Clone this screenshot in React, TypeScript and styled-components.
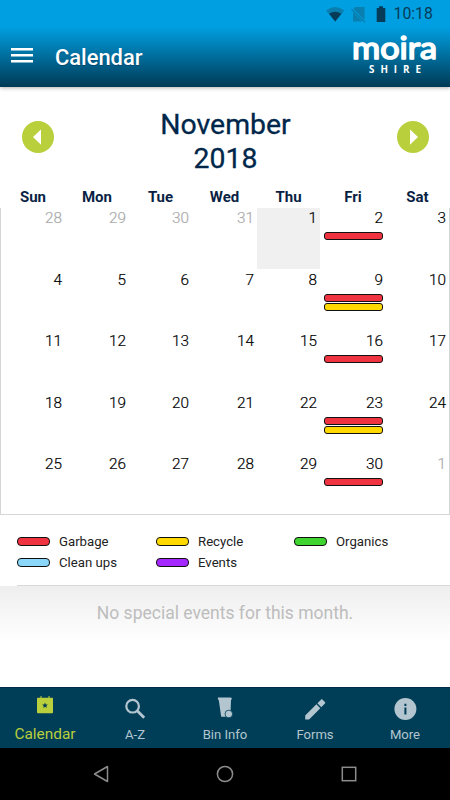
import React from 'react';
import styled, { createGlobalStyle } from 'styled-components';

const Global = createGlobalStyle`
  * { box-sizing: border-box; }
  body { margin: 0; background: #fff; font-family: Roboto, "Liberation Sans", sans-serif; }
`;

const Screen = styled.div`
  width: 450px;
  height: 800px;
  display: flex;
  flex-direction: column;
  overflow: hidden;
  background: #fff;
`;

const Top = styled.header`
  height: 87px;
  flex: none;
  display: flex;
  flex-direction: column;
  background: linear-gradient(#009fe1 0, #009fe1 27px, #003a55 100%);
  box-shadow: 0 1px 4px rgba(0, 0, 0, 0.3);
`;

const StatusBar = styled.div`
  height: 27px;
  padding: 1px 17px 0 0;
  display: flex;
  justify-content: flex-end;
  align-items: center;
  color: #063c58;
`;

const StatusIcons = styled.svg`
  width: 62px;
  height: 18px;
  margin-right: 6px;
`;

const Clock = styled.span`
  width: 39.5px;
  font-size: 15.8px;
  line-height: 20px;
  white-space: nowrap;
`;

const TitleBar = styled.div`
  height: 60px;
  display: flex;
  align-items: center;
  padding: 0 12px 0 11px;
`;

const MenuIcon = styled.svg`
  width: 22px;
  height: 16px;
  margin-top: -4px;
`;

const Title = styled.h1`
  margin: 0 0 0 22px;
  flex: 1;
  font-size: 21.9px;
  font-weight: 500;
  color: #fff;
  text-shadow: 0 1px 1px rgba(0, 30, 70, 0.35);
`;

const Brand = styled.svg`
  width: 90px;
  height: 54px;
  margin-top: -4px;
  fill: #fff;
  overflow: visible;
`;

const MonthBar = styled.div`
  height: 100px;
  flex: none;
  display: flex;
  align-items: center;
  justify-content: space-between;
  padding: 0 21px 0 22px;
`;

const RoundButton = styled.button`
  width: 32px;
  height: 32px;
  padding: 0;
  border: 0;
  border-radius: 50%;
  background: #bacf3c;
  display: flex;
`;

const Month = styled.h2`
  margin: 9px 0 0;
  width: 150px;
  text-align: center;
  font-size: 28.4px;
  line-height: 34px;
  font-weight: 400;
  color: #00274a;
  -webkit-text-stroke: 0.3px #00274a;
`;

const COLUMNS = '64px 64px 63px 65px 63px 66px 63px';

const Weekdays = styled.div`
  height: 21px;
  flex: none;
  display: grid;
  grid-template-columns: ${COLUMNS};
  padding: 0 1px;
`;

const Weekday = styled.div`
  text-align: center;
  font-size: 15px;
  line-height: 21px;
  font-weight: 700;
  color: #0a1f44;
`;

const MonthGrid = styled.div`
  height: 307px;
  flex: none;
  display: grid;
  grid-template-columns: ${COLUMNS};
  grid-template-rows: 62px 61.4px 61.3px 61.3px 60px;
  border: solid #d6d6d6;
  border-width: 0 1px 1px;
`;

const Day = styled.div<{ $muted: boolean; $today: boolean }>`
  padding: 1px 3px 0;
  text-align: right;
  font-size: 15.3px;
  font-weight: 300;
  -webkit-text-stroke: 0.2px currentColor;
  line-height: 18px;
  color: ${(p) => (p.$muted ? '#aaa' : '#000')};
  background: ${(p) => (p.$today ? '#f0f0f0' : 'transparent')};
  height: ${(p) => (p.$today ? '61px' : 'auto')};
`;

const DayNumber = styled.div`
  height: 23px;
`;

const EventBar = styled.div<{ $color: string }>`
  width: 59px;
  height: 8px;
  margin: 0 0 1px auto;
  border: 1px solid #111;
  border-radius: 3px;
  background: ${(p) => p.$color};
`;

const Legend = styled.div`
  height: 71px;
  margin-left: 17px;
  flex: none;
  display: grid;
  grid-template-columns: 139px 138px 1fr;
  grid-template-rows: 21px 21px;
  padding-top: 16px;
  border-bottom: 1px solid #d8d8d8;
`;

const LegendItem = styled.div`
  display: flex;
  align-items: center;
  gap: 9px;
  font-size: 13.2px;
  color: #222;
`;

const Swatch = styled.span<{ $color: string }>`
  width: 33px;
  height: 9px;
  border: 1px solid #111;
  border-radius: 4px;
  background: ${(p) => p.$color};
`;

const Empty = styled.div`
  flex: 1;
  padding-top: 16px;
  text-align: center;
  font-size: 17.5px;
  line-height: 22px;
  color: #bdbdbd;
  background: linear-gradient(#eeeeee, #fff 56px);
`;

const Tabs = styled.nav`
  height: 61px;
  flex: none;
  display: grid;
  grid-template-columns: repeat(5, 1fr);
  background: #003e58;
  border-top: 1px solid #002c49;
`;

const Tab = styled.div<{ $active: boolean }>`
  display: flex;
  flex-direction: column;
  align-items: center;
  padding-top: 7px;
  color: ${(p) => (p.$active ? '#bacf3c' : '#b3c6cf')};
  font-size: ${(p) => (p.$active ? '15.4px' : '13.1px')};
`;

const TabIcon = styled.svg`
  width: 30px;
  height: 30px;
  fill: currentColor;
`;

const TabLabel = styled.span<{ $active: boolean }>`
  margin-top: ${(p) => (p.$active ? '-1px' : '0')};
  line-height: 20px;
  white-space: nowrap;
`;

const SystemNav = styled.div`
  height: 52px;
  flex: none;
  display: flex;
  justify-content: center;
  align-items: center;
  gap: 104px;
  background: #000;
`;

const SystemIcon = styled.svg`
  width: 20px;
  height: 20px;
  fill: none;
  stroke: #8c8c8c;
  stroke-width: 1.5;
`;

const RED = '#f03340';
const YELLOW = '#ffd900';

const EVENTS: Record<string, string[]> = {
  '2': [RED],
  '9': [RED, YELLOW],
  '16': [RED],
  '23': [RED, YELLOW],
  '30': [RED],
};

const days = Array.from({ length: 35 }, (_, i) => {
  if (i < 4) return { label: String(28 + i), muted: true };
  if (i === 34) return { label: '1', muted: true };
  return { label: String(i - 3), muted: false };
});

const legend = [
  ['Garbage', RED],
  ['Recycle', YELLOW],
  ['Organics', '#3fd42f'],
  ['Clean ups', '#8ad7fa'],
  ['Events', '#a428ff'],
];

const tabs = [
  {
    label: 'Calendar',
    icon: (
      <>
        <path d="M8 2.8h2.5V1h1v1.8h7V1h1v1.8H22a1 1 0 0 1 1 1v13.5a1 1 0 0 1-1 1H8a1 1 0 0 1-1-1V3.8a1 1 0 0 1 1-1z" />
        <path fill="#003e58" d="m15 7.5.8 1.9 2 .2-1.5 1.3.5 2-1.8-1.1-1.8 1.1.5-2-1.5-1.3 2-.2z" />
      </>
    ),
  },
  {
    label: 'A-Z',
    icon: (
      <>
        <circle cx="12.6" cy="11.2" r="6.3" fill="none" stroke="currentColor" strokeWidth="2.2" />
        <path d="m17.2 15.8 7 7" stroke="currentColor" strokeWidth="2.8" />
      </>
    ),
  },
  {
    label: 'Bin Info',
    icon: (
      <>
        <path d="M8 2.6h13l.9 1.2-.9 1.5-.4 10.2-2 6.2h-7.4L8.8 5.3 7.8 4z" />
        <circle cx="18.8" cy="19" r="3.8" stroke="#003e58" strokeWidth=".8" />
      </>
    ),
  },
  {
    label: 'Forms',
    icon: <path d="M5.2 20.5v3.9h3.9L20.3 13.2l-3.9-3.9zM21.3 12.2l3.6-3.6c.5-.5.5-1.1 0-1.6l-2.3-2.3c-.5-.5-1.1-.5-1.6 0l-3.6 3.6z" />,
  },
  {
    label: 'More',
    icon: (
      <>
        <circle cx="15.4" cy="14" r="11" />
        <path fill="#003e58" d="M14.4 8.8h2v2.1h-2zM14.4 12.6h2v6.8h-2z" />
      </>
    ),
  },
];

export default function App() {
  return (
    <>
      <Global />
      <Screen>
        <Top>
          <StatusBar>
            <StatusIcons viewBox="0 0 62 18">
              <path d="M0 5.6Q9.2-1.4 18.4 5.6L9.2 16.5z" fill="#087fae" />
              <path d="M3 8.8Q9.2 4.5 15.4 8.8L9.2 16.5z" fill="#063c58" />
              <path d="M29 2h9.5v13L27.5 4zM27 7v9.5h9.5z" fill="#087fae" />
              <path d="m25.5 4.2 13.5 13" stroke="#087fae" strokeWidth="1.3" />
              <path d="M53 1.2h4V3h2.3v14H50.7V3H53z" fill="#063c58" />
            </StatusIcons>
            <Clock>10:18</Clock>
          </StatusBar>
          <TitleBar>
            <MenuIcon viewBox="0 0 22 16">
              <path d="M0 2.2h22M0 8.2h22M0 14.2h22" stroke="#fff" strokeWidth="2.4" />
            </MenuIcon>
            <Title>Calendar</Title>
            <Brand viewBox="0 0 90 54">
              <text x="4" y="30.5" textLength="85" lengthAdjust="spacingAndGlyphs" fontFamily="Lato" fontSize="31" fontWeight="400" stroke="#fff" strokeWidth="1.6" strokeLinejoin="round">moira</text>
              <text x="21" y="44.6" textLength="52" fontFamily="Open Sans" fontSize="9.8" fontWeight="700">SHIRE</text>
            </Brand>
          </TitleBar>
        </Top>
        <MonthBar>
          <RoundButton aria-label="Previous month">
            <svg width="32" height="32"><path d="M19 8.5v15.2L11 16z" fill="#fff" /></svg>
          </RoundButton>
          <Month>November<br />2018</Month>
          <RoundButton aria-label="Next month">
            <svg width="32" height="32"><path d="M13 8.5v15.2L21 16z" fill="#fff" /></svg>
          </RoundButton>
        </MonthBar>
        <Weekdays>
          {['Sun', 'Mon', 'Tue', 'Wed', 'Thu', 'Fri', 'Sat'].map((d) => (
            <Weekday key={d}>{d}</Weekday>
          ))}
        </Weekdays>
        <MonthGrid>
          {days.map((d, i) => (
            <Day key={i} $muted={d.muted} $today={i === 4}>
              <DayNumber>{d.label}</DayNumber>
              {!d.muted && (EVENTS[d.label] ?? []).map((c) => <EventBar key={c} $color={c} />)}
            </Day>
          ))}
        </MonthGrid>
        <Legend>
          {legend.map(([name, color]) => (
            <LegendItem key={name}>
              <Swatch $color={color} />
              <span>{name}</span>
            </LegendItem>
          ))}
        </Legend>
        <Empty>No special events for this month.</Empty>
        <Tabs>
          {tabs.map((t, i) => (
            <Tab key={t.label} $active={i === 0}>
              <TabIcon viewBox="0 0 30 30">{t.icon}</TabIcon>
              <TabLabel $active={i === 0}>{t.label}</TabLabel>
            </Tab>
          ))}
        </Tabs>
        <SystemNav>
          <SystemIcon viewBox="0 0 20 20"><path d="M16.5 2.5v15L3.5 10z" strokeLinejoin="round" /></SystemIcon>
          <SystemIcon viewBox="0 0 20 20"><circle cx="10" cy="10" r="7.6" /></SystemIcon>
          <SystemIcon viewBox="0 0 20 20"><rect x="3.3" y="3.3" width="13.4" height="13.4" /></SystemIcon>
        </SystemNav>
      </Screen>
    </>
  );
}
